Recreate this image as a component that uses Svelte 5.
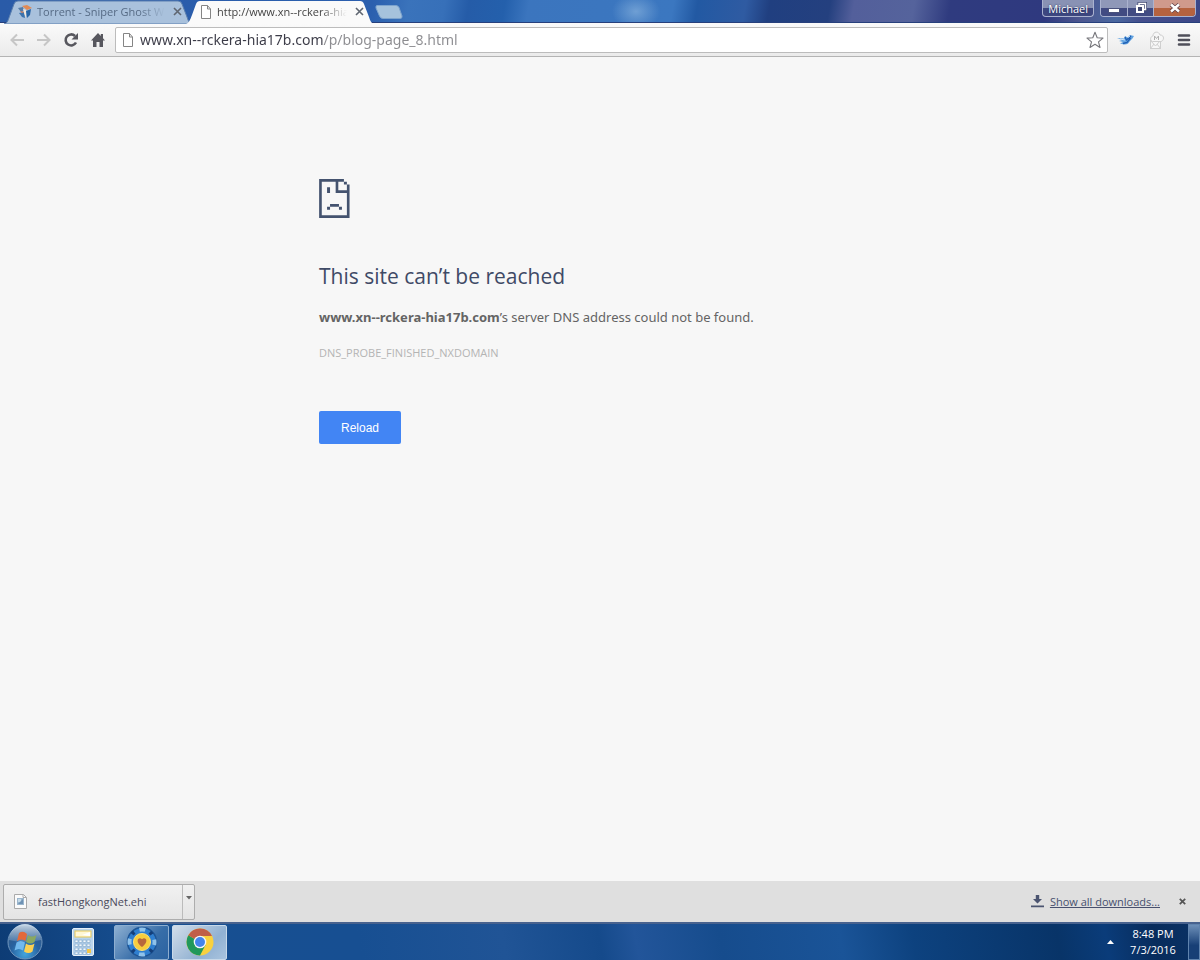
<script>
  let url = $state('www.xn--rckera-hia17b.com/p/blog-page_8.html');
</script>

{#snippet page()}
  <svg class="page-icon" viewBox="0 0 12 14" width="12" height="14" aria-hidden="true">
    <path d="M1.5.5h6l3 3.5v9.500h-9z" fill="#fff" stroke="#858585" />
    <path d="M7.500.5v3.500h3" fill="none" stroke="#858585" />
  </svg>
{/snippet}

{#snippet cross()}
  <svg viewBox="0 0 9 9" width="9" height="9" aria-hidden="true">
    <path d="M1 1l7 7M8 1l-7 7" stroke="currentColor" stroke-width="1.600" />
  </svg>
{/snippet}

<div class="screen">
  <header class="titlebar">
    <div class="tabs">
      <div class="tab inactive">
        <svg class="shape" viewBox="0 0 188 24" preserveAspectRatio="none" aria-hidden="true">
          <path d="M0 24C4 23 4 20 6 15L10 4Q11 1 14 1H174Q177 1 178 4L183 17Q185 24 188 24Z" fill="#a9c1dc" stroke="#5b7fae" />
        </svg>
        <svg class="favicon" viewBox="0 0 14 14" width="14" height="14" aria-hidden="true">
          <path d="M0 3l5-1 1 4-3 1z" fill="#557ca8" />
          <path d="M4 1l5-1 5 3-5 2z" fill="#e18a55" />
          <path d="M8 6l5-2-1 6-3 3z" fill="#2966a6" />
          <path d="M1 8l5-1 1 6-3-1z" fill="#3c73ad" />
          <path d="M5 4l3 1v8l-2-5z" fill="#f3e9dc" />
          <path d="M2 6l4 1-2 1z" fill="#dc7542" />
        </svg>
        <span class="tab-title">Torrent - Sniper Ghost W</span>
        <button class="tab-close" aria-label="Close tab">{@render cross()}</button>
      </div>
      <div class="tab active">
        <svg class="shape" viewBox="0 0 188 24" preserveAspectRatio="none" aria-hidden="true">
          <path d="M0 24C3 23 4 20 6 15L10 4Q11 1 14 1H174Q177 1 178 4L183 17Q185 24 188 24Z" fill="#fafafa" />
        </svg>
        {@render page()}
        <span class="tab-title">http://www.xn--rckera-hia</span>
        <button class="tab-close" aria-label="Close tab">{@render cross()}</button>
      </div>
      <button class="new-tab" aria-label="New tab">
        <svg viewBox="0 0 28 14" width="28" height="14" aria-hidden="true">
          <path d="M2 .5H21Q23 .5 24 2.500L27 11Q27.500 13.500 25 13.500H8Q5.500 13.500 4.500 11L1 3Q.5 .5 2 .5Z" fill="#a6c2dc" stroke="#7da3cd" />
        </svg>
      </button>
    </div>
    <div class="window-controls">
      <button class="user">Michael</button>
      <div class="frame">
        <button class="min" aria-label="Minimize">
          <svg viewBox="0 0 12 12" width="12" height="12"><rect x=".5" y="6.500" width="11" height="4" fill="#fff" stroke="#4a527c" /></svg>
        </button>
        <button class="max" aria-label="Restore">
          <svg viewBox="0 0 12 12" width="12" height="12">
            <path d="M4 3V1.500h6.500v6H9" fill="none" stroke="#3f4770" stroke-width="3" />
            <path d="M4 3V1.500h6.500v6H9" fill="none" stroke="#fff" stroke-width="1.500" />
            <rect x="2" y="4" width="6" height="6" fill="#3f4770" stroke="#fff" stroke-width="2" />
          </svg>
        </button>
        <button class="close" aria-label="Close">
          <svg viewBox="0 0 12 12" width="12" height="12">
            <path d="M2 2.500l8 7M10 2.500l-8 7" stroke="#5c3b45" stroke-width="4" />
            <path d="M2 2.500l8 7M10 2.500l-8 7" stroke="#fff" stroke-width="2.500" />
          </svg>
        </button>
      </div>
    </div>
  </header>

  <nav class="toolbar" aria-label="Browser toolbar">
    <button aria-label="Back">
      <svg viewBox="0 0 16 16" width="16" height="16"><path d="M15 8H2.500M8 2.500L2.500 8L8 13.500" fill="none" stroke="#c6c6c6" stroke-width="2" /></svg>
    </button>
    <button aria-label="Forward">
      <svg viewBox="0 0 16 16" width="16" height="16"><path d="M1 8H13.500M8 2.500L13.500 8L8 13.500" fill="none" stroke="#c6c6c6" stroke-width="2" /></svg>
    </button>
    <button aria-label="Reload page">
      <svg viewBox="0 0 16 16" width="16" height="16">
        <path d="M13 10.500A5.500 5.500 0 1 1 12 4" fill="none" stroke="#57575e" stroke-width="2.600" />
        <path d="M15 1v6.500H8.500z" fill="#57575e" />
      </svg>
    </button>
    <button aria-label="Home">
      <svg viewBox="0 0 16 16" width="16" height="16">
        <path d="M8 1L1 8.500h2V15h3.500v-5h3v5H13V8.500h2L13 6.300V2h-2.200v2z" fill="#57575e" />
      </svg>
    </button>
    <div class="omnibox">
      {@render page()}
      <input aria-label="Address" bind:value={url} spellcheck="false" />
      <button class="star" aria-label="Bookmark this page">
        <svg viewBox="0 0 18 18" width="18" height="18"><path d="M9 1.300l2.200 5.500 5.800.3-4.500 3.700 1.500 5.700L9 13.300l-5 3.200 1.500-5.700L1 7.100l5.800-.3z" fill="#fff" stroke="#77777c" stroke-width="1.100" stroke-linejoin="round" /></svg>
      </button>
    </div>
    <button class="ext" aria-label="Bird extension">
      <svg viewBox="0 0 18 14" width="18" height="14">
        <path d="M0 5L7 5.500L8 3L10.500 4.500L13 2L17 3L15.500 5.500L13 8Q11 12 7 11.500L3 10.500L6 9L2 8L5 7Z" fill="#62a3e0" />
        <path d="M6 10.500L10 9.500L13.500 5M8 4L9.500 7L14 3" fill="none" stroke="#1f5fb4" stroke-width="1.300" />
        <path d="M3 6l5 1M11 4.500l2-1.500" stroke="#cfe6fa" />
      </svg>
    </button>
    <button class="ext" aria-label="Mail extension">
      <svg viewBox="0 0 18 18" width="18" height="18" fill="#f7f7f7" stroke="#cfcfcf">
        <rect x="3.500" y="9.500" width="10" height="8" />
        <path d="M3.500 9.500L8.500 15l5-5.500M3.500 17.500L7 13M13.500 17.500L10 13" fill="none" />
        <path d="M5.500 10.500C2 9 4 5 6 5C6 0 12 0 13 4C18 4 17 10 14 10.500z" />
        <path d="M7.500 9V5l2 2.500 2-2.500v4" fill="none" stroke="#b2b2b2" />
      </svg>
    </button>
    <button aria-label="Menu">
      <svg viewBox="0 0 14 12" width="14" height="12"><path d="M2 1.500h10M2 6h10M2 10.500h10" stroke="#4f4f5a" stroke-width="2.600" stroke-linecap="round" /></svg>
    </button>
  </nav>

  <main>
    <svg class="sad" viewBox="57 42 93 118" width="31" height="39" aria-hidden="true">
      <path fill="#44536f" fill-rule="evenodd" d="M57 42H132V50H141V59H149V160H57ZM65 50V152H141V84H107V50ZM115 50V76H141V59H132V50Z" />
      <path fill="#44536f" d="M81 67h9v17h-9zM90 118h27v8h-27zM81 126h9v9h-9zM117 126h9v9h-9z" />
    </svg>
    <h1>This site can’t be reached</h1>
    <p class="summary"><strong>www.xn--rckera-hia17b.com</strong>’s server DNS address could not be found.</p>
    <p class="code">DNS_PROBE_FINISHED_NXDOMAIN</p>
    <button class="reload">Reload</button>
  </main>

  <section class="shelf" aria-label="Downloads">
    <div class="download">
      <button class="file">
        <svg viewBox="0 0 13 15" width="13" height="15" aria-hidden="true">
          <path d="M.5.5h9l3 3v11H.5z" fill="#fbfbfb" stroke="#aaa" />
          <path d="M9 .5v3h3.500" fill="none" stroke="#aaa" />
          <rect x="3" y="4" width="7" height="7" fill="#9bb6cd" />
          <path d="M4 5h3v3H4z" fill="#c5dbe9" />
          <path d="M4 10l5-5v5z" fill="#6f92b4" />
        </svg>
        fastHongkongNet.ehi
      </button>
      <button class="more" aria-label="Download options">
        <svg viewBox="0 0 6 4" width="6" height="4"><path d="M0 0h6L3 3.500z" fill="#666" /></svg>
      </button>
    </div>
    <a class="all" href="#downloads">
      <svg viewBox="0 0 13 13" width="13" height="13" aria-hidden="true"><path d="M4.800 0h3.400v4H11L6.500 8.500 2 4h2.800zM0 10.500h13v1.800H0z" fill="#4b5470" /></svg>
      <span>Show all downloads...</span>
    </a>
    <button class="shelf-close" aria-label="Close downloads bar">
      <svg viewBox="0 0 9 9" width="7" height="7" aria-hidden="true"><path d="M1 1l7 7M8 1l-7 7" stroke="#555" stroke-width="2.200" /></svg>
    </button>
  </section>

  <footer class="taskbar">
    <button class="start" aria-label="Start">
      <svg viewBox="0 0 36 36" width="36" height="36">
        <defs>
          <radialGradient id="orb" cx=".5" cy=".85" r=".85">
            <stop offset="0" stop-color="#43a5dd" /><stop offset=".5" stop-color="#2862a0" /><stop offset="1" stop-color="#37577f" />
          </radialGradient>
          <linearGradient id="gloss" x2="0" y2="1">
            <stop offset="0" stop-color="#d8e6f2" stop-opacity=".9" /><stop offset="1" stop-color="#a9c2dc" stop-opacity=".25" />
          </linearGradient>
        </defs>
        <circle cx="18" cy="18" r="17" fill="url(#orb)" stroke="#7096bd" />
        <path d="M2 16A16 16 0 0 1 34 16Q18 20 2 16Z" fill="url(#gloss)" />
        <path d="M12 9q4-3 8 1l-1.500 7q-4-3-8.500 0z" fill="#e2693a" />
        <path d="M21 11q4 3 8.500 0l-2 7q-4 3-8.500 0z" fill="#8aa860" />
        <path d="M9.500 18.500q4-3 8.500 0l-2 8q-4-3-8.500 0z" fill="#72b9ee" />
        <path d="M19 19.500q4 3 8.500 0l-2 8q-4 3-8.500 0z" fill="#fbd052" />
      </svg>
    </button>
    <button class="task plain" aria-label="Calculator">
      <svg viewBox="0 0 22 28" width="22" height="28">
        <rect x=".5" y=".5" width="21" height="27" rx="1.500" fill="#b9d4ec" stroke="#e6f0f8" />
        <rect x="3" y="3" width="16" height="6" fill="#fff7d5" stroke="#e6c85b" />
        <path d="M10 7l8-3v4z" fill="#fff" />
        <g fill="#f3f8fc" stroke="#7ba4c9" stroke-width=".6">
          {#each [12, 16, 20, 24] as y}
            {#each [3, 7, 11, 15] as x}<rect {x} {y} width="3" height="2.500" />{/each}
          {/each}
        </g>
        <rect x="15" y="21" width="4" height="4" fill="#f2c64a" />
      </svg>
    </button>
    <button class="task" aria-label="HTTP Injector">
      <svg viewBox="0 0 32 32" width="32" height="32">
        <circle cx="16" cy="16" r="12" fill="none" stroke="#2f7fd0" stroke-width="6" />
        <circle cx="16" cy="16" r="14.500" fill="none" stroke="#1f5594" stroke-width="1.500" />
        <circle cx="16" cy="16" r="12.500" fill="none" stroke="#8fc2ea" stroke-width="4" stroke-dasharray="6 13.630" stroke-dashoffset="3" />
        <circle cx="16" cy="16" r="12.500" fill="none" stroke="#143f7a" stroke-width="4" stroke-dasharray="3 16.630" stroke-dashoffset="-8" />
        <circle cx="16" cy="16" r="8.500" fill="#f8ce3e" stroke="#fae17b" />
        <path d="M16 21C12 18 11 15 12 13.200Q14 11.300 16 13.300Q18 11.300 20 13.200C21 15 20 18 16 21Z" fill="#b8683c" />
      </svg>
    </button>
    <button class="task current" aria-label="Google Chrome">
      <svg viewBox="0 0 28 28" width="28" height="28">
        <circle cx="14" cy="14" r="13.500" fill="#f9d13e" />
        <path d="M14 14L2.300 7.300A13.500 13.500 0 0 0 14 27.500L19.500 17z" fill="#20985b" />
        <path d="M14 14L2.300 7.300A13.500 13.500 0 0 1 26 8H14z" fill="#c05e48" />
        <circle cx="14" cy="14" r="6.300" fill="#f3f6fa" />
        <circle cx="14" cy="14" r="5" fill="#4484ec" />
      </svg>
    </button>
    <button class="tray" aria-label="Show hidden icons">
      <svg viewBox="0 0 7 4" width="7" height="4"><path d="M0 4h7L3.500 0z" fill="#fff" /></svg>
    </button>
    <time class="clock" datetime="2016-07-03T20:48"><span>8:48 PM</span><span>7/3/2016</span></time>
    <button class="peek" aria-label="Show desktop"></button>
  </footer>
</div>

<style>
  :global(body) { margin: 0; }
  .screen {
    display: flex;
    flex-direction: column;
    min-height: 100vh;
    font-family: "Open Sans", "Noto Sans", sans-serif;
    font-size: 11px;
    background: #f7f7f7;
  }
  button {
    display: flex;
    align-items: center;
    justify-content: center;
    padding: 0;
    border: 0;
    background: none;
    font: inherit;
    color: inherit;
  }
  svg { display: block; flex: none; }

  .titlebar {
    display: flex;
    justify-content: space-between;
    height: 24px;
    box-sizing: border-box;
    border-bottom: 1px solid #fafafa;
    background:
      linear-gradient(transparent 22px, #27407c 22px),
      radial-gradient(ellipse 24px 18px at 53% 50%, #6f9fd4, transparent),
      linear-gradient(100deg, #2a5ba8 0%, #2b5fae 31%, #3a73bb 34%, #3770b9 37%, #255ca8 39%, #2460ac 42%, #3b75be 44%, #3b77c0 56%, #2259a3 58%, #2f5ba2 62%, #203f80 64%, #24407f 69%, #535f9b 71%, #55639c 76%, #2f3b7f 79%, #2f397f 87%, #4c568f 90%, #4a68a0 93%, #454f8d 95%, #3c4788 100%);
  }
  .tabs { display: flex; padding-left: 4px; }
  .tab {
    position: relative;
    display: flex;
    align-items: center;
    gap: 5px;
    width: 188px;
    height: 24px;
    box-sizing: border-box;
    padding: 0 8px 1px 14px;
    color: #444;
  }
  .tab > * { position: relative; }
  .tab > .shape { position: absolute; inset: 0; width: 100%; height: 100%; }
  .inactive { color: #566b85; }
  .active { margin-left: -6px; z-index: 1; }
  .tab-title {
    flex: 1;
    min-width: 0;
    white-space: nowrap;
    mask-image: linear-gradient(90deg, #000 80%, transparent);
  }
  .tab-close { width: 14px; height: 14px; color: #5f6671; }
  .new-tab { align-self: flex-start; padding: 5px 0 0 1px; }

  .window-controls { display: flex; align-items: flex-start; gap: 6px; padding-right: 4px; }
  .window-controls button { height: 16px; color: #fff; }
  .user {
    padding: 0 5px;
    border: 1px solid #aab2cf;
    border-top: 0;
    border-radius: 0 0 4px 4px;
    background: linear-gradient(#8992b4 50%, #3d4780 50%);
    text-shadow: 0 0 2px #222c55;
  }
  .window-controls .user { height: 17px; }
  .frame {
    display: flex;
    border: 1px solid #aab2cf;
    border-top: 0;
    border-radius: 0 0 4px 4px;
    overflow: hidden;
  }
  .min, .max { width: 26px; background: linear-gradient(#8f98b8 50%, #414b82 50%); }
  .max { border-left: 1px solid #aab2cf; }
  .close { width: 42px; border-left: 1px solid #aab2cf; background: linear-gradient(#d09a8c 50%, #b5623f 50%); }

  .toolbar {
    display: flex;
    align-items: center;
    gap: 5px;
    height: 32px;
    padding: 0 5px 0 6px;
    border-bottom: 1px solid #b4b4b4;
    background: linear-gradient(#fafafa, #ebebeb);
  }
  .toolbar > button { width: 22px; height: 24px; }
  .toolbar > .ext { width: 25px; }
  .omnibox {
    display: flex;
    flex: 1;
    align-items: center;
    gap: 6px;
    height: 24px;
    margin-left: 1px;
    padding: 0 3px 0 6px;
    border: 1px solid #bcbcbc;
    border-radius: 2px;
    background: #fff;
  }
  .omnibox input {
    flex: 1;
    min-width: 0;
    height: 22px;
    padding: 0 0 2px;
    border: 0;
    outline: 0;
    font: 14px "Noto Sans", "Open Sans", sans-serif;
    color: transparent;
    caret-color: #333;
    background: linear-gradient(90deg, #3c3c48 183px, #8c8c90 183px);
    background-clip: text;
  }

  main {
    flex: 1;
    display: flex;
    flex-direction: column;
    align-items: flex-start;
    width: 562px;
    max-width: 100%;
    box-sizing: border-box;
    margin: 0 auto;
    padding-top: 122px;
    color: #646464;
  }
  h1 {
    margin: 42px 0 0;
    font-size: 21px;
    font-weight: 400;
    line-height: 32px;
    color: #3f4a66;
  }
  p { margin: 0; }
  .summary {
    margin-top: 15px;
    font-family: "Noto Sans", "Open Sans", sans-serif;
    font-size: 13px;
    line-height: 20px;
  }
  .code { margin-top: 18px; font-size: 11px; line-height: 16px; color: #b4b4b4; }
  .reload {
    height: 33px;
    margin-top: 50px;
    padding: 0 22px;
    border-radius: 2px;
    background: #4285f4;
    color: #fff;
    font-family: "Liberation Sans", Arial, sans-serif;
    font-size: 12px;
  }

  .shelf {
    display: flex;
    align-items: center;
    height: 41px;
    padding: 0 11px 0 3px;
    background: #dfdfdf;
    color: #4a4a5c;
  }
  .download {
    display: flex;
    height: 34px;
    margin-right: auto;
    border: 1px solid #adadad;
    border-radius: 2px;
    background: linear-gradient(#f1f1f1, #e4e4e4);
  }
  .file { gap: 11px; width: 178px; padding-left: 10px; justify-content: flex-start; }
  .more { width: 12px; padding-bottom: 8px; border-left: 1px solid #bbb; }
  .all { display: flex; align-items: center; gap: 6px; margin-right: 15px; color: #47506e; }
  .shelf-close { width: 14px; height: 14px; }

  .taskbar {
    display: flex;
    align-items: center;
    height: 36px;
    padding-left: 7px;
    border-top: 2px solid #48628e;
    background: linear-gradient(80deg, #0d3c75 0%, #174f91 12%, #174f92 30%, #205496 42%, #154a8b 50%, #22559a 53%, #164c8d 60%, #1a5498 70%, #0d427f 76%, #083468 88%, #0a3c7a 92%, #082c5c 96%, #0a3266 100%);
    color: #fff;
  }
  .task {
    width: 55px;
    height: 35px;
    margin-right: 3px;
    border: 1px solid #8daed0;
    border-radius: 2px;
    background: linear-gradient(135deg, #8eb0d2, #376da8 60%, #2b63a1);
  }
  .plain { border-color: transparent; background: none; margin: 0 4px 0 12px; }
  .current { margin: 0; background: linear-gradient(135deg, #d2dde9, #91b1d2 65%, #a9c4df); border-color: #c8d9e9; }
  .tray { width: 15px; height: 24px; margin-left: auto; }
  .clock {
    display: flex;
    flex-direction: column;
    align-items: center;
    width: 70px;
    line-height: 16px;
  }
  .peek { width: 12px; height: 36px; border: 1px solid #5f83ae; background: linear-gradient(#6d8fb8, #173f76 60%); }
</style>
